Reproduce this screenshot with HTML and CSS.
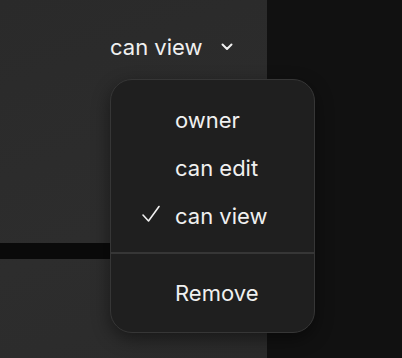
FILE: index.html
```html
<!DOCTYPE html>
<html>
    <head>
        <meta name="viewport" content="width=device-width"/>
        <title>share permission menu</title>
        <link rel="stylesheet" href="styles.css">
    </head>
    <body>
        <div class="panel">
            <div class="trigger">
                <span>can view</span>
                <svg class="chevron" width="12" height="8" viewBox="0 0 12 8"><path d="M1.5 1.5 L6 6 L10.5 1.5" fill="none" stroke="#f0f0f0" stroke-width="2" stroke-linecap="round" stroke-linejoin="round"/></svg>
            </div>
            <div class="divider-bar"></div>
        </div>
        <div class="side"></div>

        <!-- dropdown sits over the panel -->
        <div class="menu">
            <div class="item">owner</div>
            <div class="item">can edit</div>
            <div class="item checked">
                <svg class="check" width="20" height="18" viewBox="0 0 20 18"><path d="M2 10 L7.5 16 L18 1.5" fill="none" stroke="#f0f0f0" stroke-width="1.6" stroke-linecap="round" stroke-linejoin="round"/></svg>
                can view
            </div>
            <div class="sep"></div>
            <div class="item">Remove</div>
        </div>
    </body>
</html>
```
FILE: styles.css
```css
html, body {
    margin: 0;
    height: 100%;
}
body {
    display: flex;
    background: #111;
    font-family: Inter, "Liberation Sans", sans-serif;
    color: #f0f0f0;
    overflow: hidden;
}
.panel {
    width: 267px;
    height: 100%;
    background: linear-gradient(160deg, #2a2a2a, #2d2d2d 60%, #2b2b2b);
    display: flex;
    flex-direction: column;
}
.trigger {
    display: flex;
    align-items: center;
    height: 26px;
    margin-top: 34px;
    padding-left: 110px;
    font-size: 22px;
}
.chevron {
    margin-left: 19px;
}
.divider-bar {
    height: 16px;
    margin-top: 183px;
    background: #0a0a0a;
}
.side {
    flex: 1;
}
.menu {
    position: absolute;
    left: 110px;
    top: 79px;
    width: 203px;
    padding: 16px 0 15px;
    background: #1f1f1f;
    border: 1px solid #363636;
    border-radius: 22px;
    box-shadow: 0 6px 18px rgba(0, 0, 0, .45);
}
.item {
    position: relative;
    height: 48px;
    line-height: 48px;
    padding-left: 64px;
    font-size: 22px;
}
.check {
    position: absolute;
    left: 30px;
    top: 13px;
}
.sep {
    height: 2px;
    margin: 12px 0 15px;
    background: #363636;
}
```
